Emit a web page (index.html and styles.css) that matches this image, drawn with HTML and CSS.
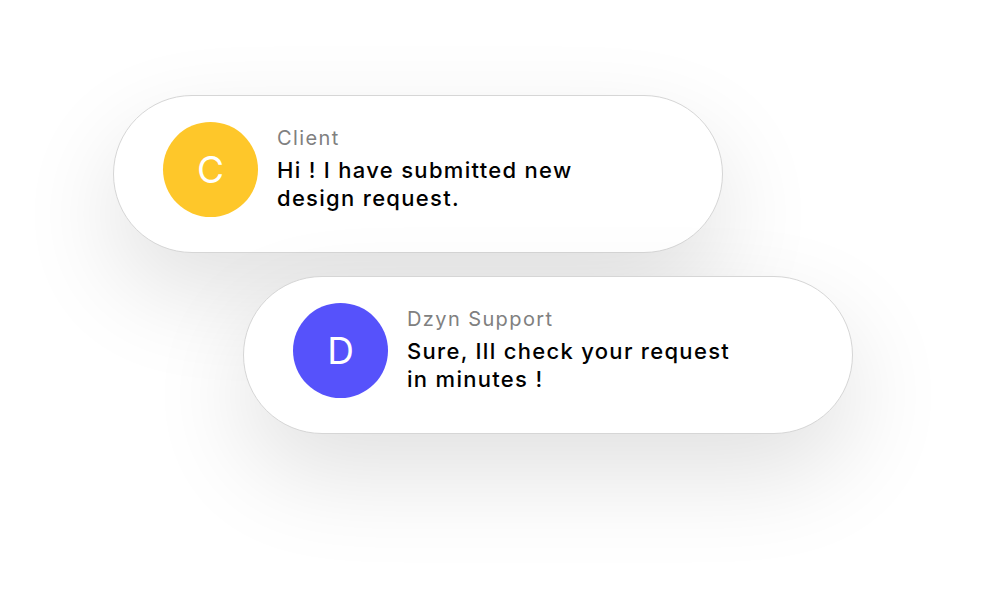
FILE: index.html
```html
<!DOCTYPE html>
<html lang="en">
<head>
    <meta charset="UTF-8">
    <meta name="viewport" content="width=device-width, initial-scale=1.0">
    <title>Chat Bubbles</title>
    <link rel="stylesheet" href="styles.css">
</head>
<body>
    <div class="chat">
        <div class="bubble">
            <div class="avatar client">C</div>
            <div class="bubble-text">
                <div class="name">Client</div>
                <div class="message">Hi ! I have submitted new<br>design request.</div>
            </div>
        </div>
        <div class="bubble reply">
            <div class="avatar support">D</div>
            <div class="bubble-text">
                <div class="name">Dzyn Support</div>
                <div class="message">Sure, Ill check your request<br>in minutes !</div>
            </div>
        </div>
    </div>
</body>
</html>
```

FILE: styles.css
```css
body {
    font-family: Inter, "Open Sans", sans-serif;
    margin: 0;
    background: #fff;
    height: 100vh;
    overflow: hidden;
}
.chat {
    display: flex;
    flex-direction: column;
    gap: 23px;
    padding-top: 95px;
    padding-left: 113px;
}
.bubble {
    display: flex;
    align-items: center;
    gap: 19px;
    width: 610px;
    height: 158px;
    box-sizing: border-box;
    padding: 0 0 9px 49px;
    background: #fff;
    border: 1px solid #d6d6d6;
    border-radius: 79px;
    box-shadow: 0 40px 100px rgba(0,0,0,0.12);
}
.bubble.reply {
    margin-left: 130px;
}
.bubble-text {
    padding-bottom: 3px;
}
.avatar {
    width: 95px;
    height: 95px;
    border-radius: 50%;
    flex-shrink: 0;
    display: flex;
    justify-content: center;
    align-items: center;
    color: #fff;
    font-size: 37px;
    font-weight: 400;
}
.avatar.client {
    background: #fec72a;
}
.avatar.support {
    background: #5652fb;
}
.name {
    color: #808080;
    font-size: 20px;
    line-height: 26px;
    letter-spacing: 1.4px;
    margin-bottom: 5px;
}
.message {
    color: #000;
    font-size: 22px;
    line-height: 28px;
    letter-spacing: 1.3px;
    font-weight: 500;
}
```
